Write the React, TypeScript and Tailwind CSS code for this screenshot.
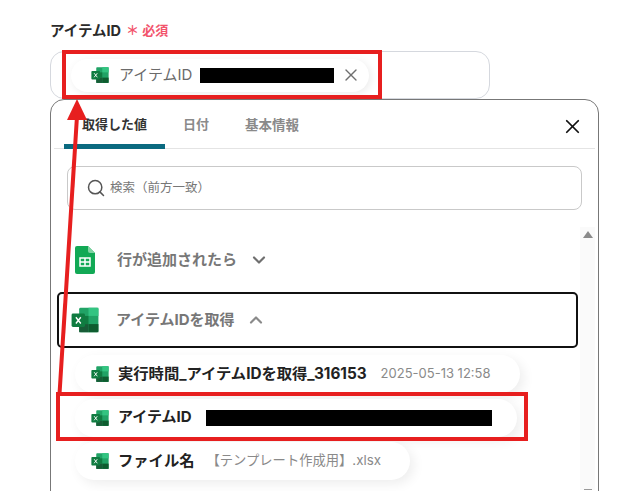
import { X, Search, ChevronDown, ChevronUp } from "lucide-react";

function ExcelIcon({ size = 18 }: { size?: number }) {
  return (
    <svg width={size} height={size} viewBox="0 0 24 24" className="shrink-0">
      <rect x="7" y="1.5" width="16.5" height="21" rx="1.2" fill="#21a366" />
      <rect x="15" y="1.5" width="8.5" height="7" fill="#33c481" />
      <rect x="7" y="8.5" width="8" height="7" fill="#107c41" />
      <rect x="15" y="15.5" width="8.5" height="7" fill="#0e5c2f" />
      <rect x="7" y="15.5" width="8" height="7" fill="#185c37" />
      <rect x="0.5" y="6.5" width="11.5" height="11.5" rx="1.2" fill="#107c41" />
      <path d="M4.2 9.6 L8.4 15 M8.4 9.6 L4.2 15" stroke="#fff" strokeWidth="1.2" />
    </svg>
  );
}

function SheetsIcon() {
  return (
    <svg width="20" height="28" viewBox="0 0 20 28" className="shrink-0">
      <path d="M2 0 H13 L20 7 V26 a2 2 0 0 1-2 2 H2 a2 2 0 0 1-2-2 V2 a2 2 0 0 1 2-2 Z" fill="#12a955" />
      <path d="M13 0 L20 7 H15 a2 2 0 0 1-2-2 Z" fill="#7fd3a2" />
      <rect x="5" y="12" width="10" height="8" fill="none" stroke="#fff" strokeWidth="1.5" />
      <path d="M5 16 H15 M10 12 V20" stroke="#fff" strokeWidth="1.5" />
    </svg>
  );
}

function ValueChip({ width, children }: { width: string; children: React.ReactNode }) {
  return (
    <div className={`flex h-[38px] items-center rounded-[19px] bg-white pl-4 shadow-[4px_4px_12px_rgba(0,0,0,0.07)] ${width}`}>
      <ExcelIcon />
      {children}
    </div>
  );
}

export default function App() {
  return (
    <div className="relative h-[491px] w-[643px] overflow-hidden bg-white font-['Inter','Noto_Sans_CJK_JP',sans-serif]">
      <div className="px-[50px] pt-[21px]">
        {/* Field label */}
        <div className="flex h-[20px] items-center gap-[5px]">
          <span className="text-[14.5px] font-bold text-[#2b2b2b]">アイテムID</span>
          <span className="text-[13px] font-bold text-[#f2546c]">＊ 必須</span>
        </div>

        {/* Selected value field */}
        <div className="mt-[10px] flex h-[48px] w-[440px] items-center rounded-[14px] border border-[#d5d8de] pl-[20px]">
          <div className="flex h-[33px] w-[298px] items-center rounded-[17px] bg-white pl-[20px] shadow-[2px_2px_8px_rgba(0,0,0,0.08)]">
            <ExcelIcon />
            <span className="ml-[10px] text-[15px] text-[#6b6b6b]">アイテムID</span>
            <div className="ml-[8px] h-[15px] w-[134px] bg-black" />
            <X size={20} strokeWidth={1.6} className="ml-[7px] text-[#6f6f6f]" />
          </div>
        </div>

        {/* Picker panel */}
        <div className="h-[420px] w-[549px] rounded-t-[14px] border border-[#777]">
          <div className="relative mx-[3px] flex h-[49px] items-start border-b border-[#e4e4e4]">
            <div className="ml-[10px] h-[49px] w-[101px] border-b-[5px] border-[#0b6a80] pt-[15px] text-center text-[13px] font-bold text-[#333]">取得した値</div>
            <div className="ml-[18px] pt-[15px] text-[13px] font-bold text-[#8a8a8a]">日付</div>
            <div className="ml-[36px] pt-[15px] text-[13.5px] font-bold text-[#8a8a8a]">基本情報</div>
            <X size={23} strokeWidth={1.8} className="absolute right-[11px] top-[15px] text-[#111]" />
          </div>

          <div className="mx-[16px] mt-[17px] flex h-[44px] w-[515px] items-center gap-[4px] rounded-[8px] border border-[#c9c9c9] pl-[18px]">
            <Search size={20} strokeWidth={1.8} className="text-[#555]" />
            <span className="pt-[1px] text-[12.5px] text-[#777]">検索（前方一致）</span>
          </div>

          <div className="relative pt-[36px]">
            {/* Scrollbar */}
            <div className="absolute right-[3px] top-[17px] flex h-[263px] w-[15px] flex-col items-center justify-between bg-[#fafafa] pt-[4px]">
              <div className="h-0 w-0 border-x-[5px] border-b-[7px] border-x-transparent border-b-[#8a8a8a]" />
              <div className="h-[1px] w-[8px] bg-[#999]" />
            </div>

            <div className="ml-[24px] flex h-[28px] items-center">
              <SheetsIcon />
              <span className="ml-[22px] text-[15px] font-bold text-[#777]">行が追加されたら</span>
              <ChevronDown size={20} strokeWidth={2.6} className="ml-[12px] text-[#6f6f6f]" />
            </div>

            <div className="ml-[6px] mt-[18px] flex h-[56px] w-[521px] items-center rounded-[5px] border-2 border-[#111] pl-[12px]">
              <ExcelIcon size={28} />
              <span className="ml-[17px] text-[15px] font-bold text-[#777]">アイテムIDを取得</span>
              <ChevronUp size={20} strokeWidth={2.6} className="ml-[11px] text-[#8a8a8a]" />
            </div>

            <div className="ml-[24px] mt-[7px] flex flex-col gap-[5.5px]">
              <ValueChip width="w-[445px]">
                <span className="ml-[9px] text-[15.3px] font-bold text-[#222]">実行時間_アイテムIDを取得_316153</span>
                <span className="ml-[14px] text-[13px] text-[#8a8a8a]">2025-05-13 12:58</span>
              </ValueChip>
              <ValueChip width="w-[442px]">
                <span className="ml-[9px] text-[15px] font-bold text-[#222]">アイテムID</span>
                <div className="ml-[14px] h-[16px] w-[286px] bg-black" />
              </ValueChip>
              <ValueChip width="w-[335px]">
                <span className="ml-[9px] text-[15.3px] font-bold text-[#222]">ファイル名</span>
                <span className="ml-[12px] text-[13.3px] text-[#8a8a8a]">【テンプレート作成用】.xlsx</span>
              </ValueChip>
            </div>
          </div>
        </div>
      </div>

      {/* Red annotation boxes and arrow */}
      <div className="absolute left-[62px] top-[50px] h-[49px] w-[320px] border-4 border-[#e71f1f]" />
      <div className="absolute left-[56px] top-[392px] h-[49px] w-[472px] border-4 border-[#e71f1f]" />
      <svg className="absolute left-0 top-0" width="643" height="491">
        <path d="M59.5 394 L77 116" stroke="#e71f1f" strokeWidth="4" fill="none" />
        <polygon points="77,99 67,120 87,120" fill="#e71f1f" />
      </svg>
    </div>
  );
}
